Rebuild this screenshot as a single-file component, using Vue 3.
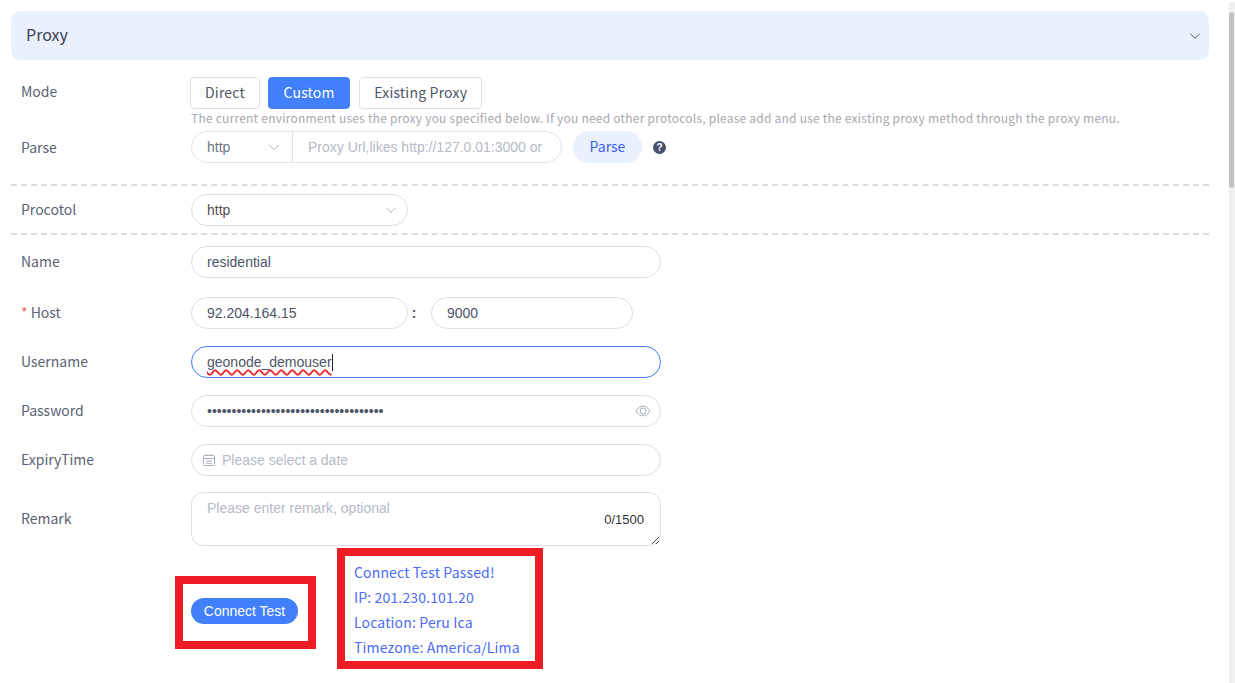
<script setup>
const dots = '•'.repeat(36)
</script>

<template>
  <div class="viewport">
    <main class="page">
      <header class="panel-head">
        <span class="head-title">Proxy</span>
        <svg class="chev-head" width="12" height="12" viewBox="0 0 12 12"><path d="M1.5 4 L6 8.2 L10.5 4" fill="none" stroke="#46506c" stroke-width="1" /></svg>
      </header>

      <div class="row mode-row">
        <label class="label">Mode</label>
        <div class="modes">
          <button class="mode">Direct</button>
          <button class="mode active">Custom</button>
          <button class="mode">Existing Proxy</button>
        </div>
      </div>
      <p class="tip">The current environment uses the proxy you specified below. If you need other protocols, please add and use the existing proxy method through the proxy menu.</p>

      <div class="row parse-row">
        <label class="label">Parse</label>
        <div class="group">
          <div class="group-select">
            <span>http</span>
            <svg width="12" height="12" viewBox="0 0 12 12"><path d="M1 4 L6 8.6 L11 4" fill="none" stroke="#b4bac6" stroke-width="1" /></svg>
          </div>
          <div class="group-input">Proxy Url,likes http://127.0.01:3000 or</div>
        </div>
        <button class="parse">Parse</button>
        <span class="help">?</span>
      </div>

      <div class="dash first"></div>
      <div class="row proto-row">
        <label class="label raised">Procotol</label>
        <div class="field proto">
          <span>http</span>
          <svg width="12" height="12" viewBox="0 0 12 12"><path d="M1 3.6 L6 8.2 L11 3.6" fill="none" stroke="#b4bac6" stroke-width="1" /></svg>
        </div>
      </div>
      <div class="dash second"></div>

      <div class="row name-row">
        <label class="label raised">Name</label>
        <div class="field wide">residential</div>
      </div>
      <div class="row host-row">
        <label class="label raised"><span class="req">*</span> Host</label>
        <div class="field host">92.204.164.15</div>
        <span class="colon">:</span>
        <div class="field port">9000</div>
      </div>
      <div class="row user-row">
        <label class="label raised">Username</label>
        <div class="field wide focus"><span class="spell">geonode_demouser</span><i class="caret"></i></div>
      </div>
      <div class="row pass-row">
        <label class="label raised">Password</label>
        <div class="field wide between">
          <span class="dots">{{ dots }}</span>
          <svg width="16" height="16" viewBox="0 0 16 16" fill="none" stroke="#a9b0bd" stroke-width="1"><path d="M1 8 C3 4.6 5.4 3.2 8 3.2 S13 4.6 15 8 C13 11.4 10.6 12.8 8 12.8 S3 11.4 1 8 Z" /><circle cx="8" cy="8" r="3" /></svg>
        </div>
      </div>
      <div class="row date-row">
        <label class="label raised">ExpiryTime</label>
        <div class="field wide date">
          <svg width="14" height="14" viewBox="0 0 14 14" fill="none" stroke="#a9b0bd" stroke-width="1"><rect x="1.5" y="2.5" width="11" height="10" rx="1" /><path d="M1.5 5.5 H12.5 M4.5 1 V3 M9.5 1 V3 M4 8 H10 M4 10.2 H10" /></svg>
          <span class="ph">Please select a date</span>
        </div>
      </div>
      <div class="row remark-row">
        <label class="label raised">Remark</label>
        <div class="area">
          <span class="ph">Please enter remark, optional</span>
          <span class="count">0/1500</span>
          <svg class="grip" width="9" height="9" viewBox="0 0 9 9" stroke="#555" stroke-width="1"><path d="M1 8 L8 1 M5 8 L8 5" /></svg>
        </div>
      </div>

      <div class="test-row">
        <div class="mark btn-mark"><button class="connect">Connect Test</button></div>
        <div class="mark result">
          <div>Connect Test Passed!</div>
          <div>IP: 201.230.101.20</div>
          <div>Location: Peru Ica</div>
          <div>Timezone: America/Lima</div>
        </div>
      </div>
    </main>
    <aside class="track"><div class="thumb"></div></aside>
  </div>
</template>

<style>
html, body { margin: 0; background: #fff; overflow: hidden; }
</style>

<style scoped>
.viewport {
  display: flex;
  height: 683px;
  width: 1235px;
  overflow: hidden;
  background: #fff;
  color: #4d5568;
  font-family: "Noto Sans CJK SC", "Noto Sans", sans-serif;
  font-size: 14px;
}
.page { width: 1198px; margin-left: 11px; padding-top: 11px; flex: none; }
.track { width: 6px; margin-left: 20px; margin-top: 2px; background: #f1f1f1; flex: none; }
.thumb { height: 176px; margin-top: 10px; width: 5px; background: #c1c1c1; border-radius: 3px; }

.panel-head {
  height: 49px;
  background: #eaf1fd;
  border-radius: 9px;
  display: flex;
  align-items: center;
  justify-content: space-between;
  padding: 0 8px 0 15px;
  font-size: 16px;
  color: #3a4256;
}
.head-title { margin-top: -4px; }
.row { display: flex; align-items: center; }
.label { width: 170px; box-sizing: border-box; padding-left: 10px; flex: none; color: #5b6375; line-height: 20px; }
.label.raised { margin-top: -2px; }
.req { color: #ef5b5b; }

.mode-row { margin-top: 17px; height: 32px; }
.mode-row .label { margin-top: -5px; }
.modes { display: flex; gap: 8px; margin-left: 9px; }
.mode {
  height: 32px;
  padding: 0 14px 2px;
  box-sizing: border-box;
  border: 1px solid #dcdfe6;
  border-radius: 4px;
  background: #fff;
  color: #4d5568;
  font: inherit;
  letter-spacing: 0.2px;
  line-height: 1;
}
.mode.active { background: #417ffb; border-color: #417ffb; color: #fff; padding: 0 14.5px 2px; margin-right: 1px; }
.tip { margin: 0 0 0 180px; height: 20px; font-size: 12px; letter-spacing: 0.225px; line-height: 18px; color: #a6a9af; white-space: nowrap; }

.parse-row { margin-top: 2px; height: 32px; }
.group {
  display: flex;
  width: 371px;
  height: 32px;
  margin-left: 10px;
  box-sizing: border-box;
  border: 1px solid #e1e4eb;
  border-radius: 16px;
  font-family: "Liberation Sans", sans-serif;
}
.group-select {
  width: 101px;
  box-sizing: border-box;
  border-right: 1px solid #dcdfe6;
  display: flex;
  align-items: center;
  justify-content: space-between;
  padding: 0 12px 0 15px;
  color: #6d7484;
}
.group-input { padding: 0 0 0 15px; line-height: 30px; color: #b6bbc6; white-space: nowrap; overflow: hidden; }
.parse {
  margin-left: 11px;
  height: 32px;
  width: 69px;
  border: 0;
  border-radius: 16px;
  background: #eaf1fd;
  color: #3f5ff0;
  font: inherit;
  padding: 0 0 2px;
}
.help {
  margin-left: 11px;
  width: 13px;
  height: 13px;
  border-radius: 50%;
  background: #46506c;
  color: #fff;
  font: bold 10px/13px "Liberation Sans", sans-serif;
  text-align: center;
}

.dash { border-top: 2px dashed #d9dce3; }
.dash.first { margin-top: 21px; }
.dash.second { margin-top: 7px; }
.proto-row { margin-top: 8px; }
.field {
  height: 32px;
  box-sizing: border-box;
  border: 1px solid #dcdfe6;
  border-radius: 16px;
  padding: 0 15px;
  display: flex;
  align-items: center;
  margin-left: 10px;
  font-family: "Liberation Sans", sans-serif;
  color: #4d5568;
  background: #fff;
}
.proto { width: 217px; justify-content: space-between; padding-right: 10px; color: #5a4a55; }
.wide { width: 470px; }
.between { justify-content: space-between; padding-right: 9px; }
.name-row { margin-top: 11px; }
.host-row { margin-top: 19px; }
.host { width: 217px; }
.colon { width: 12px; text-align: center; font-family: "Liberation Sans", sans-serif; font-weight: 700; color: #4d5568; }
.port { width: 202px; margin-left: 11px; }
.user-row { margin-top: 17px; }
.focus { border-color: #417ffb; position: relative; }
.spell {
  text-decoration: underline wavy #ef2b2b 1.5px;
  text-decoration-skip-ink: none;
  text-underline-offset: 2px;
}
.caret { width: 1px; height: 17px; background: #222; margin-left: 0; }
.pass-row { margin-top: 17px; }
.dots { font-size: 14px; color: #4d5568; }
.date-row { margin-top: 17px; }
.date { padding-left: 10px; gap: 6px; }
.ph { color: #b6bbc6; font-family: "Liberation Sans", sans-serif; }
.remark-row { margin-top: 16px; align-items: center; }
.area {
  position: relative;
  margin-left: 10px;
  width: 470px;
  height: 54px;
  box-sizing: border-box;
  border: 1px solid #dcdfe6;
  border-radius: 12px;
  padding: 6px 15px;
  line-height: 16px;
}
.count { position: absolute; right: 16px; top: 18px; font: 13px/18px "Liberation Sans", sans-serif; color: #333; }
.grip { position: absolute; right: 0; bottom: 0; }

.test-row { display: flex; align-items: flex-start; margin-top: 2px; margin-left: 164px; }
.mark { border: 8px solid #ee1c25; box-sizing: border-box; }
.btn-mark {
  margin-top: 28px;
  width: 141px;
  height: 73px;
  padding: 0 2px 3px 0;
  display: flex;
  align-items: center;
  justify-content: center;
}
.connect {
  height: 26px;
  width: 107px;
  border: 0;
  border-radius: 13px;
  background: #417ffb;
  color: #fff;
  font: 14px "Liberation Sans", sans-serif;
  padding: 0;
}
.result {
  margin-left: 21px;
  width: 206px;
  height: 121px;
  padding: 4px 0 0 9px;
  color: #4a6cf7;
  letter-spacing: 0.15px;
  line-height: 25px;
  white-space: nowrap;
}
</style>
